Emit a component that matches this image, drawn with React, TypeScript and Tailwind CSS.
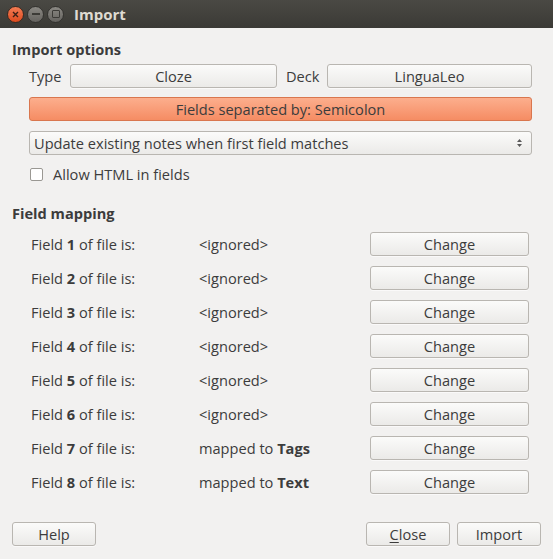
import React from "react";

const font = { fontFamily: '"Open Sans", "DejaVu Sans", sans-serif' };

const Btn = ({ children, className = "" }: { children: React.ReactNode; className?: string }) => (
  <div
    className={`flex h-6 items-center justify-center rounded-[3px] border border-[#b9b6b1] bg-gradient-to-b from-[#fbfbfa] to-[#ebeae8] text-[#3c3c3c] shadow-[0_1px_0_rgba(255,255,255,0.6)] ${className}`}
  >
    {children}
  </div>
);

const fields: { n: number; value: React.ReactNode }[] = [
  { n: 1, value: "<ignored>" },
  { n: 2, value: "<ignored>" },
  { n: 3, value: "<ignored>" },
  { n: 4, value: "<ignored>" },
  { n: 5, value: "<ignored>" },
  { n: 6, value: "<ignored>" },
  { n: 7, value: <>mapped to <b>Tags</b></> },
  { n: 8, value: <>mapped to <b>Text</b></> },
];

export default function App() {
  return (
    <div className="flex h-[559px] w-[553px] flex-col bg-[#f2f1f0] text-[14.6px] leading-[20px] text-[#3c3c3c]" style={font}>
      {/* title bar */}
      <div className="flex h-7 items-center bg-gradient-to-b from-[#4a4944] to-[#3b3a36] px-[7px]">
        <div className="flex items-center gap-[3px]">
          <div className="flex h-[17px] w-[17px] items-center justify-center rounded-full border border-[#3a2a22] bg-gradient-to-b from-[#f37b52] to-[#dd4a1c]">
            <svg width="7" height="7" viewBox="0 0 7 7" stroke="#3b2016" strokeWidth="1.4">
              <path d="M1 1l5 5M6 1l-5 5" />
            </svg>
          </div>
          <div className="flex h-[17px] w-[17px] items-center justify-center rounded-full border border-[#33322f] bg-gradient-to-b from-[#8a8883] to-[#65635f]">
            <div className="h-[2px] w-[8px] bg-[#3c3b37]" />
          </div>
          <div className="flex h-[17px] w-[17px] items-center justify-center rounded-full border border-[#33322f] bg-gradient-to-b from-[#8a8883] to-[#65635f]">
            <div className="h-[8px] w-[8px] rounded-[1px] border-[1.5px] border-[#3c3b37]" />
          </div>
        </div>
        <span className="ml-[10px] text-[15px] font-bold text-[#dfdbd2]">Import</span>
      </div>

      <div className="flex flex-1 flex-col px-3 pt-[11px]">
        <div className="font-bold">Import options</div>
        <div className="mt-[5px] flex flex-col gap-[9px] pl-[17px] pr-[9px]">
          <div className="flex items-center">
            <span className="w-[41px]">Type</span>
            <Btn className="w-[207px]">Cloze</Btn>
            <span className="ml-[9px] w-[41px]">Deck</span>
            <Btn className="flex-1">LinguaLeo</Btn>
          </div>
          <div className="flex h-6 items-center justify-center rounded-[3px] border border-[#d9764e] bg-gradient-to-b from-[#fcae8d] to-[#f58c63]">
            Fields separated by: Semicolon
          </div>
          <div className="mt-[1px] flex h-6 items-center rounded-[3px] border border-[#b9b6b1] bg-gradient-to-b from-[#fbfbfa] to-[#ebeae8] pl-[4px] pr-[8px]">
            <span className="flex-1">Update existing notes when first field matches</span>
            <svg width="7" height="10" viewBox="0 0 7 10" fill="#5a5a5a">
              <path d="M3.5 1L6 4H1z M3.5 9L1 6h5z" />
            </svg>
          </div>
          <div className="flex items-center pl-[1px]">
            <div className="h-[13px] w-[13px] rounded-[2px] border border-[#9a9893] bg-white" />
            <span className="ml-[10px]">Allow HTML in fields</span>
          </div>
        </div>

        <div className="mt-[19px] font-bold">Field mapping</div>
        <div className="mt-[9px] flex flex-col gap-[10px] pl-[19px] pr-[12px]">
          {fields.map((f) => (
            <div key={f.n} className="flex items-center">
              <span className="w-[168px]">
                Field <b>{f.n}</b> of file is:
              </span>
              <span className="flex-1">{f.value}</span>
              <Btn className="w-[159px]">Change</Btn>
            </div>
          ))}
        </div>

        <div className="mt-auto mb-[13px] flex items-center">
          <Btn className="w-[84px]">Help</Btn>
          <div className="flex-1" />
          <Btn className="w-[84px]">
            <span>
              <span className="underline underline-offset-2">C</span>lose
            </span>
          </Btn>
          <Btn className="ml-[7px] w-[84px]">Import</Btn>
        </div>
      </div>
    </div>
  );
}
